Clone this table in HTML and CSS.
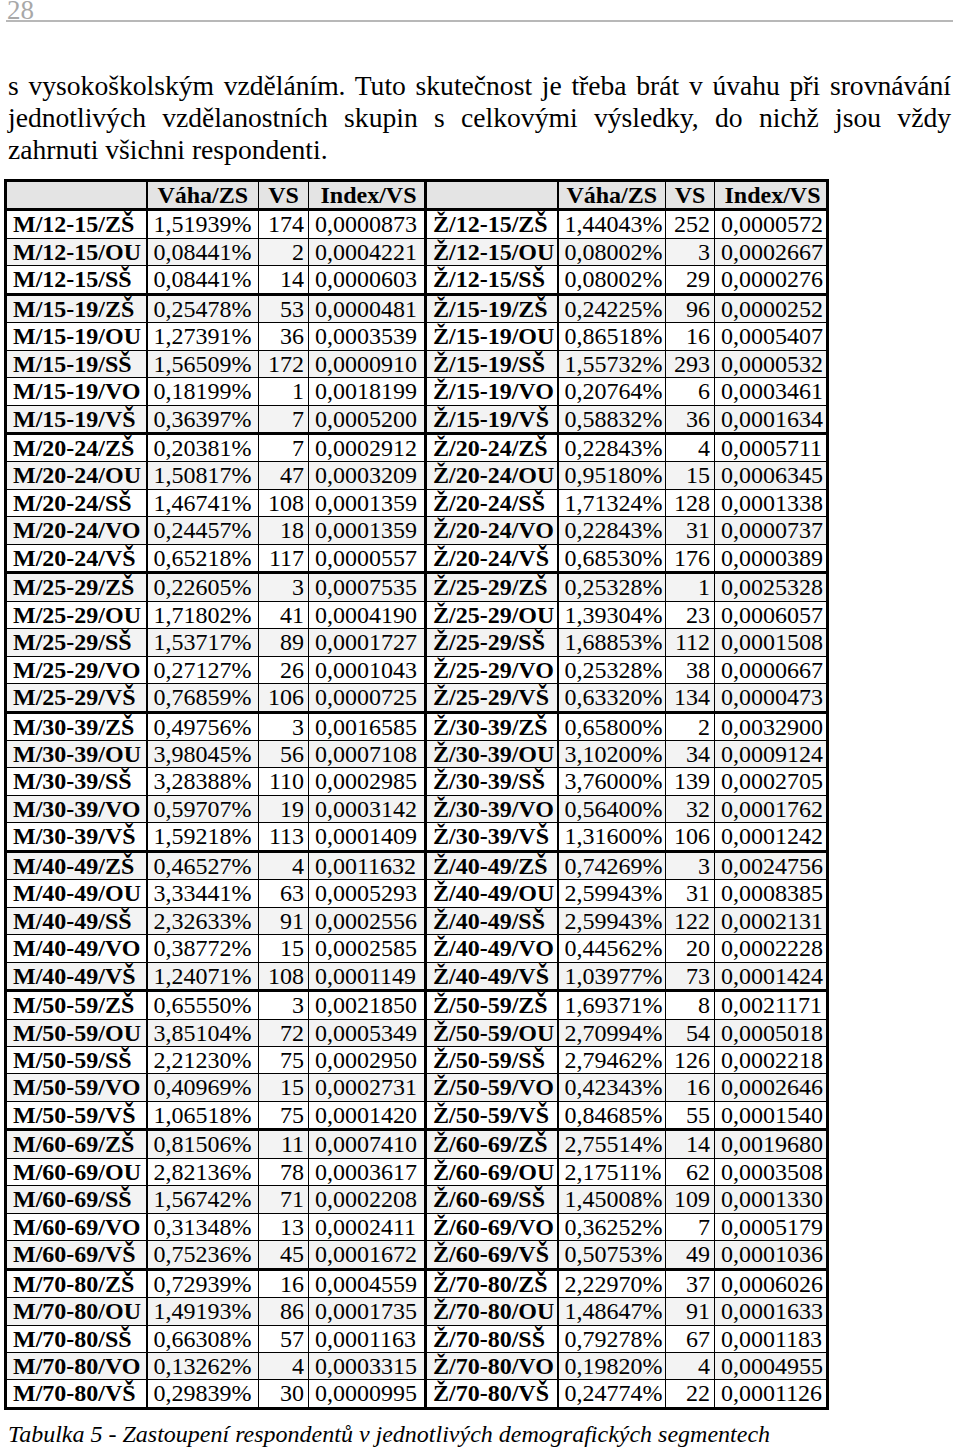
FILE: index.html
```html
<!DOCTYPE html>
<html lang="cs">
<head>
<meta charset="utf-8">
<title>Tabulka 5</title>
<link rel="stylesheet" href="styles.css">
</head>
<body>
<div class="page">
  <header class="running">
    <span class="pageno">28</span>
  </header>
  <p class="text">s&nbsp;vysokoškolským vzděláním. Tuto skutečnost je třeba brát v úvahu při srovnávání jednotlivých vzdělanostních skupin s&nbsp;celkovými výsledky, do nichž jsou vždy zahrnuti všichni respondenti.</p>
  <table class="data">
    <colgroup>
      <col class="c1"><col class="c2"><col class="c3"><col class="c4">
      <col class="c5"><col class="c6"><col class="c7"><col class="c8">
    </colgroup>
    <thead>
      <tr>
        <th class="lab"></th><th>Váha/ZS</th><th>VS</th><th class="idx">Index/VS</th>
        <th class="lab"></th><th>Váha/ZS</th><th>VS</th><th class="idx">Index/VS</th>
      </tr>
    </thead>
    <tbody id="rows">
<tr><td class="lab">M/12-15/ZŠ</td><td>1,51939%</td><td class="n">174</td><td class="idx">0,0000873</td><td class="lab">Ž/12-15/ZŠ</td><td>1,44043%</td><td class="n">252</td><td class="idx">0,0000572</td></tr>
<tr><td class="lab">M/12-15/OU</td><td>0,08441%</td><td class="n">2</td><td class="idx">0,0004221</td><td class="lab">Ž/12-15/OU</td><td>0,08002%</td><td class="n">3</td><td class="idx">0,0002667</td></tr>
<tr><td class="lab">M/12-15/SŠ</td><td>0,08441%</td><td class="n">14</td><td class="idx">0,0000603</td><td class="lab">Ž/12-15/SŠ</td><td>0,08002%</td><td class="n">29</td><td class="idx">0,0000276</td></tr>
<tr class="g"><td class="lab">M/15-19/ZŠ</td><td>0,25478%</td><td class="n">53</td><td class="idx">0,0000481</td><td class="lab">Ž/15-19/ZŠ</td><td>0,24225%</td><td class="n">96</td><td class="idx">0,0000252</td></tr>
<tr><td class="lab">M/15-19/OU</td><td>1,27391%</td><td class="n">36</td><td class="idx">0,0003539</td><td class="lab">Ž/15-19/OU</td><td>0,86518%</td><td class="n">16</td><td class="idx">0,0005407</td></tr>
<tr><td class="lab">M/15-19/SŠ</td><td>1,56509%</td><td class="n">172</td><td class="idx">0,0000910</td><td class="lab">Ž/15-19/SŠ</td><td>1,55732%</td><td class="n">293</td><td class="idx">0,0000532</td></tr>
<tr><td class="lab">M/15-19/VO</td><td>0,18199%</td><td class="n">1</td><td class="idx">0,0018199</td><td class="lab">Ž/15-19/VO</td><td>0,20764%</td><td class="n">6</td><td class="idx">0,0003461</td></tr>
<tr><td class="lab">M/15-19/VŠ</td><td>0,36397%</td><td class="n">7</td><td class="idx">0,0005200</td><td class="lab">Ž/15-19/VŠ</td><td>0,58832%</td><td class="n">36</td><td class="idx">0,0001634</td></tr>
<tr class="g"><td class="lab">M/20-24/ZŠ</td><td>0,20381%</td><td class="n">7</td><td class="idx">0,0002912</td><td class="lab">Ž/20-24/ZŠ</td><td>0,22843%</td><td class="n">4</td><td class="idx">0,0005711</td></tr>
<tr><td class="lab">M/20-24/OU</td><td>1,50817%</td><td class="n">47</td><td class="idx">0,0003209</td><td class="lab">Ž/20-24/OU</td><td>0,95180%</td><td class="n">15</td><td class="idx">0,0006345</td></tr>
<tr><td class="lab">M/20-24/SŠ</td><td>1,46741%</td><td class="n">108</td><td class="idx">0,0001359</td><td class="lab">Ž/20-24/SŠ</td><td>1,71324%</td><td class="n">128</td><td class="idx">0,0001338</td></tr>
<tr><td class="lab">M/20-24/VO</td><td>0,24457%</td><td class="n">18</td><td class="idx">0,0001359</td><td class="lab">Ž/20-24/VO</td><td>0,22843%</td><td class="n">31</td><td class="idx">0,0000737</td></tr>
<tr><td class="lab">M/20-24/VŠ</td><td>0,65218%</td><td class="n">117</td><td class="idx">0,0000557</td><td class="lab">Ž/20-24/VŠ</td><td>0,68530%</td><td class="n">176</td><td class="idx">0,0000389</td></tr>
<tr class="g"><td class="lab">M/25-29/ZŠ</td><td>0,22605%</td><td class="n">3</td><td class="idx">0,0007535</td><td class="lab">Ž/25-29/ZŠ</td><td>0,25328%</td><td class="n">1</td><td class="idx">0,0025328</td></tr>
<tr><td class="lab">M/25-29/OU</td><td>1,71802%</td><td class="n">41</td><td class="idx">0,0004190</td><td class="lab">Ž/25-29/OU</td><td>1,39304%</td><td class="n">23</td><td class="idx">0,0006057</td></tr>
<tr><td class="lab">M/25-29/SŠ</td><td>1,53717%</td><td class="n">89</td><td class="idx">0,0001727</td><td class="lab">Ž/25-29/SŠ</td><td>1,68853%</td><td class="n">112</td><td class="idx">0,0001508</td></tr>
<tr><td class="lab">M/25-29/VO</td><td>0,27127%</td><td class="n">26</td><td class="idx">0,0001043</td><td class="lab">Ž/25-29/VO</td><td>0,25328%</td><td class="n">38</td><td class="idx">0,0000667</td></tr>
<tr><td class="lab">M/25-29/VŠ</td><td>0,76859%</td><td class="n">106</td><td class="idx">0,0000725</td><td class="lab">Ž/25-29/VŠ</td><td>0,63320%</td><td class="n">134</td><td class="idx">0,0000473</td></tr>
<tr class="g"><td class="lab">M/30-39/ZŠ</td><td>0,49756%</td><td class="n">3</td><td class="idx">0,0016585</td><td class="lab">Ž/30-39/ZŠ</td><td>0,65800%</td><td class="n">2</td><td class="idx">0,0032900</td></tr>
<tr><td class="lab">M/30-39/OU</td><td>3,98045%</td><td class="n">56</td><td class="idx">0,0007108</td><td class="lab">Ž/30-39/OU</td><td>3,10200%</td><td class="n">34</td><td class="idx">0,0009124</td></tr>
<tr><td class="lab">M/30-39/SŠ</td><td>3,28388%</td><td class="n">110</td><td class="idx">0,0002985</td><td class="lab">Ž/30-39/SŠ</td><td>3,76000%</td><td class="n">139</td><td class="idx">0,0002705</td></tr>
<tr><td class="lab">M/30-39/VO</td><td>0,59707%</td><td class="n">19</td><td class="idx">0,0003142</td><td class="lab">Ž/30-39/VO</td><td>0,56400%</td><td class="n">32</td><td class="idx">0,0001762</td></tr>
<tr><td class="lab">M/30-39/VŠ</td><td>1,59218%</td><td class="n">113</td><td class="idx">0,0001409</td><td class="lab">Ž/30-39/VŠ</td><td>1,31600%</td><td class="n">106</td><td class="idx">0,0001242</td></tr>
<tr class="g"><td class="lab">M/40-49/ZŠ</td><td>0,46527%</td><td class="n">4</td><td class="idx">0,0011632</td><td class="lab">Ž/40-49/ZŠ</td><td>0,74269%</td><td class="n">3</td><td class="idx">0,0024756</td></tr>
<tr><td class="lab">M/40-49/OU</td><td>3,33441%</td><td class="n">63</td><td class="idx">0,0005293</td><td class="lab">Ž/40-49/OU</td><td>2,59943%</td><td class="n">31</td><td class="idx">0,0008385</td></tr>
<tr><td class="lab">M/40-49/SŠ</td><td>2,32633%</td><td class="n">91</td><td class="idx">0,0002556</td><td class="lab">Ž/40-49/SŠ</td><td>2,59943%</td><td class="n">122</td><td class="idx">0,0002131</td></tr>
<tr><td class="lab">M/40-49/VO</td><td>0,38772%</td><td class="n">15</td><td class="idx">0,0002585</td><td class="lab">Ž/40-49/VO</td><td>0,44562%</td><td class="n">20</td><td class="idx">0,0002228</td></tr>
<tr><td class="lab">M/40-49/VŠ</td><td>1,24071%</td><td class="n">108</td><td class="idx">0,0001149</td><td class="lab">Ž/40-49/VŠ</td><td>1,03977%</td><td class="n">73</td><td class="idx">0,0001424</td></tr>
<tr class="g"><td class="lab">M/50-59/ZŠ</td><td>0,65550%</td><td class="n">3</td><td class="idx">0,0021850</td><td class="lab">Ž/50-59/ZŠ</td><td>1,69371%</td><td class="n">8</td><td class="idx">0,0021171</td></tr>
<tr><td class="lab">M/50-59/OU</td><td>3,85104%</td><td class="n">72</td><td class="idx">0,0005349</td><td class="lab">Ž/50-59/OU</td><td>2,70994%</td><td class="n">54</td><td class="idx">0,0005018</td></tr>
<tr><td class="lab">M/50-59/SŠ</td><td>2,21230%</td><td class="n">75</td><td class="idx">0,0002950</td><td class="lab">Ž/50-59/SŠ</td><td>2,79462%</td><td class="n">126</td><td class="idx">0,0002218</td></tr>
<tr><td class="lab">M/50-59/VO</td><td>0,40969%</td><td class="n">15</td><td class="idx">0,0002731</td><td class="lab">Ž/50-59/VO</td><td>0,42343%</td><td class="n">16</td><td class="idx">0,0002646</td></tr>
<tr><td class="lab">M/50-59/VŠ</td><td>1,06518%</td><td class="n">75</td><td class="idx">0,0001420</td><td class="lab">Ž/50-59/VŠ</td><td>0,84685%</td><td class="n">55</td><td class="idx">0,0001540</td></tr>
<tr class="g"><td class="lab">M/60-69/ZŠ</td><td>0,81506%</td><td class="n">11</td><td class="idx">0,0007410</td><td class="lab">Ž/60-69/ZŠ</td><td>2,75514%</td><td class="n">14</td><td class="idx">0,0019680</td></tr>
<tr><td class="lab">M/60-69/OU</td><td>2,82136%</td><td class="n">78</td><td class="idx">0,0003617</td><td class="lab">Ž/60-69/OU</td><td>2,17511%</td><td class="n">62</td><td class="idx">0,0003508</td></tr>
<tr><td class="lab">M/60-69/SŠ</td><td>1,56742%</td><td class="n">71</td><td class="idx">0,0002208</td><td class="lab">Ž/60-69/SŠ</td><td>1,45008%</td><td class="n">109</td><td class="idx">0,0001330</td></tr>
<tr><td class="lab">M/60-69/VO</td><td>0,31348%</td><td class="n">13</td><td class="idx">0,0002411</td><td class="lab">Ž/60-69/VO</td><td>0,36252%</td><td class="n">7</td><td class="idx">0,0005179</td></tr>
<tr><td class="lab">M/60-69/VŠ</td><td>0,75236%</td><td class="n">45</td><td class="idx">0,0001672</td><td class="lab">Ž/60-69/VŠ</td><td>0,50753%</td><td class="n">49</td><td class="idx">0,0001036</td></tr>
<tr class="g"><td class="lab">M/70-80/ZŠ</td><td>0,72939%</td><td class="n">16</td><td class="idx">0,0004559</td><td class="lab">Ž/70-80/ZŠ</td><td>2,22970%</td><td class="n">37</td><td class="idx">0,0006026</td></tr>
<tr><td class="lab">M/70-80/OU</td><td>1,49193%</td><td class="n">86</td><td class="idx">0,0001735</td><td class="lab">Ž/70-80/OU</td><td>1,48647%</td><td class="n">91</td><td class="idx">0,0001633</td></tr>
<tr><td class="lab">M/70-80/SŠ</td><td>0,66308%</td><td class="n">57</td><td class="idx">0,0001163</td><td class="lab">Ž/70-80/SŠ</td><td>0,79278%</td><td class="n">67</td><td class="idx">0,0001183</td></tr>
<tr><td class="lab">M/70-80/VO</td><td>0,13262%</td><td class="n">4</td><td class="idx">0,0003315</td><td class="lab">Ž/70-80/VO</td><td>0,19820%</td><td class="n">4</td><td class="idx">0,0004955</td></tr>
<tr><td class="lab">M/70-80/VŠ</td><td>0,29839%</td><td class="n">30</td><td class="idx">0,0000995</td><td class="lab">Ž/70-80/VŠ</td><td>0,24774%</td><td class="n">22</td><td class="idx">0,0001126</td></tr>
    </tbody>
  </table>
  <p class="caption">Tabulka 5 - Zastoupení respondentů v jednotlivých demografických segmentech</p>
</div>
</body>
</html>
```

FILE: styles.css
```css
html, body {
  margin: 0;
  padding: 0;
  background: #ffffff;
}

body {
  font-family: "Liberation Serif", "Times New Roman", serif;
  color: #000;
}

.page {
  width: 960px;
  padding: 0;
}

.running {
  margin: 0 7px 0 6px;
  height: 20px;
  border-bottom: 2px solid #b8b8b8;
}

.pageno {
  display: block;
  font-size: 27px;
  line-height: 21px;
  color: #a8a8a8;
  padding-left: 1px;
}

.text {
  margin: 48px 9px 0 8px;
  font-size: 27.6px;
  line-height: 31.8px;
  text-align: justify;
}

.data {
  margin: 14px 0 0 4px;
  border-collapse: collapse;
  table-layout: fixed;
  width: 822px;
  font-size: 24px;
  border: 3px solid #000;
}

.c1 { width: 141px; }
.c2 { width: 112px; }
.c3 { width: 50px; }
.c4 { width: 117px; }
.c5 { width: 132px; }
.c6 { width: 108px; }
.c7 { width: 49px; }
.c8 { width: 113px; }

.data th,
.data td {
  border: 1px solid #000;
  padding: 0 4px 0 6px;
  height: 26.45px;
  line-height: 26.45px;
  white-space: nowrap;
  overflow: hidden;
}

.data th {
  font-weight: bold;
  text-align: center;
  background: #e4e4e4;
  height: 26px;
  line-height: 26px;
  padding: 0 2px;
}

.data thead tr {
  border-bottom: 3px solid #000;
}

.data td {
  text-align: left;
}

.data td.lab {
  font-weight: bold;
  padding-left: 6px;
}

.data .lab {
  border-right: 2px solid #000;
  border-left: 3px solid #000;
}

.data td.n {
  text-align: right;
  padding: 0 4px 0 2px;
}

.data td.idx,
.data th.idx {
  padding-left: 6px;
}

.data tbody tr:nth-child(even) td {
  background: #f3f3f3;
}

.data tr.g td {
  border-top: 3px solid #000;
}

.caption {
  margin: 10px 0 0 8px;
  font-size: 24px;
  line-height: 28px;
  font-style: italic;
}
```
